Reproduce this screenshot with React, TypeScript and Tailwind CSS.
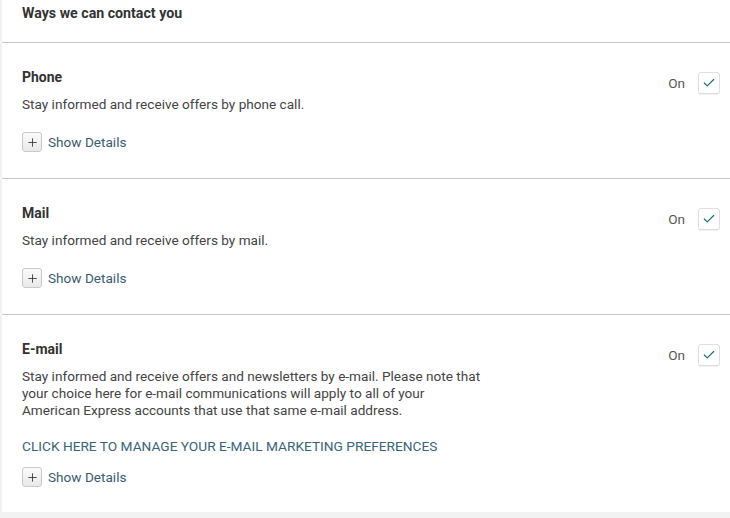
import { Check, Plus } from "lucide-react";

type Channel = {
  title: string;
  desc: string[];
  link?: string;
};

const channels: Channel[] = [
  { title: "Phone", desc: ["Stay informed and receive offers by phone call."] },
  { title: "Mail", desc: ["Stay informed and receive offers by mail."] },
  {
    title: "E-mail",
    desc: [
      "Stay informed and receive offers and newsletters by e-mail. Please note that",
      "your choice here for e-mail communications will apply to all of your",
      "American Express accounts that use that same e-mail address.",
    ],
    link: "CLICK HERE TO MANAGE YOUR E-MAIL MARKETING PREFERENCES",
  },
];

const ShowDetails = () => (
  <button className="flex items-center gap-[6px] text-[13.6px] leading-[17px] text-[#3a5d6e]">
    <span className="flex h-[20px] w-[20px] items-center justify-center rounded-[3px] border border-[#c9c9c9] bg-gradient-to-b from-[#fbfbfb] to-[#e9e9e9] text-[#333]">
      <Plus size={13} strokeWidth={1.6} />
    </span>
    Show Details
  </button>
);

const Toggle = () => (
  <div className="flex items-center gap-[13px]">
    <span className="text-[13.6px] leading-[17px] text-[#555]">On</span>
    <span className="flex h-[22px] w-[22px] items-center justify-center rounded-[3px] border border-[#dedede] bg-white shadow-[0_1px_1px_rgba(0,0,0,0.06)]">
      <Check size={14} strokeWidth={2} className="text-[#1c6d72]" />
    </span>
  </div>
);

export default function App() {
  return (
    <div
      className="h-[518px] w-[730px] overflow-hidden bg-[#f2f2f2] text-[#333]"
      style={{ fontFamily: "Roboto, 'Liberation Sans', sans-serif" }}
    >
      <div className="ml-[2px] bg-white">
        <div className="h-[43px] border-b border-[#c8c8c8] pl-[20px] pt-[5px]">
          <h2 className="text-[14.2px] font-bold leading-[17px]">Ways we can contact you</h2>
        </div>
        {channels.map((c, i) => (
          <section
            key={c.title}
            className={`flex justify-between pl-[20px] pr-[10px] pt-[26px] ${
              i < channels.length - 1 ? "h-[136px] border-b border-[#c8c8c8]" : "h-[197px]"
            }`}
          >
            <div className="flex flex-col">
              <h3 className="text-[14px] font-bold leading-[17px]">{c.title}</h3>
              <p className="mt-[10px] text-[13.6px] leading-[17px] text-[#444]">
                {c.desc.map((line, j) => (
                  <span key={j} className="block">
                    {line}
                  </span>
                ))}
              </p>
              {c.link ? (
                <>
                  <a className="mt-[19px] text-[13.7px] leading-[17px] text-[#386579]" href="#">
                    {c.link}
                  </a>
                  <div className="mt-[12px]">
                    <ShowDetails />
                  </div>
                </>
              ) : (
                <div className="mt-[19px]">
                  <ShowDetails />
                </div>
              )}
            </div>
            <div className="pt-[3px]">
              <Toggle />
            </div>
          </section>
        ))}
      </div>
    </div>
  );
}
